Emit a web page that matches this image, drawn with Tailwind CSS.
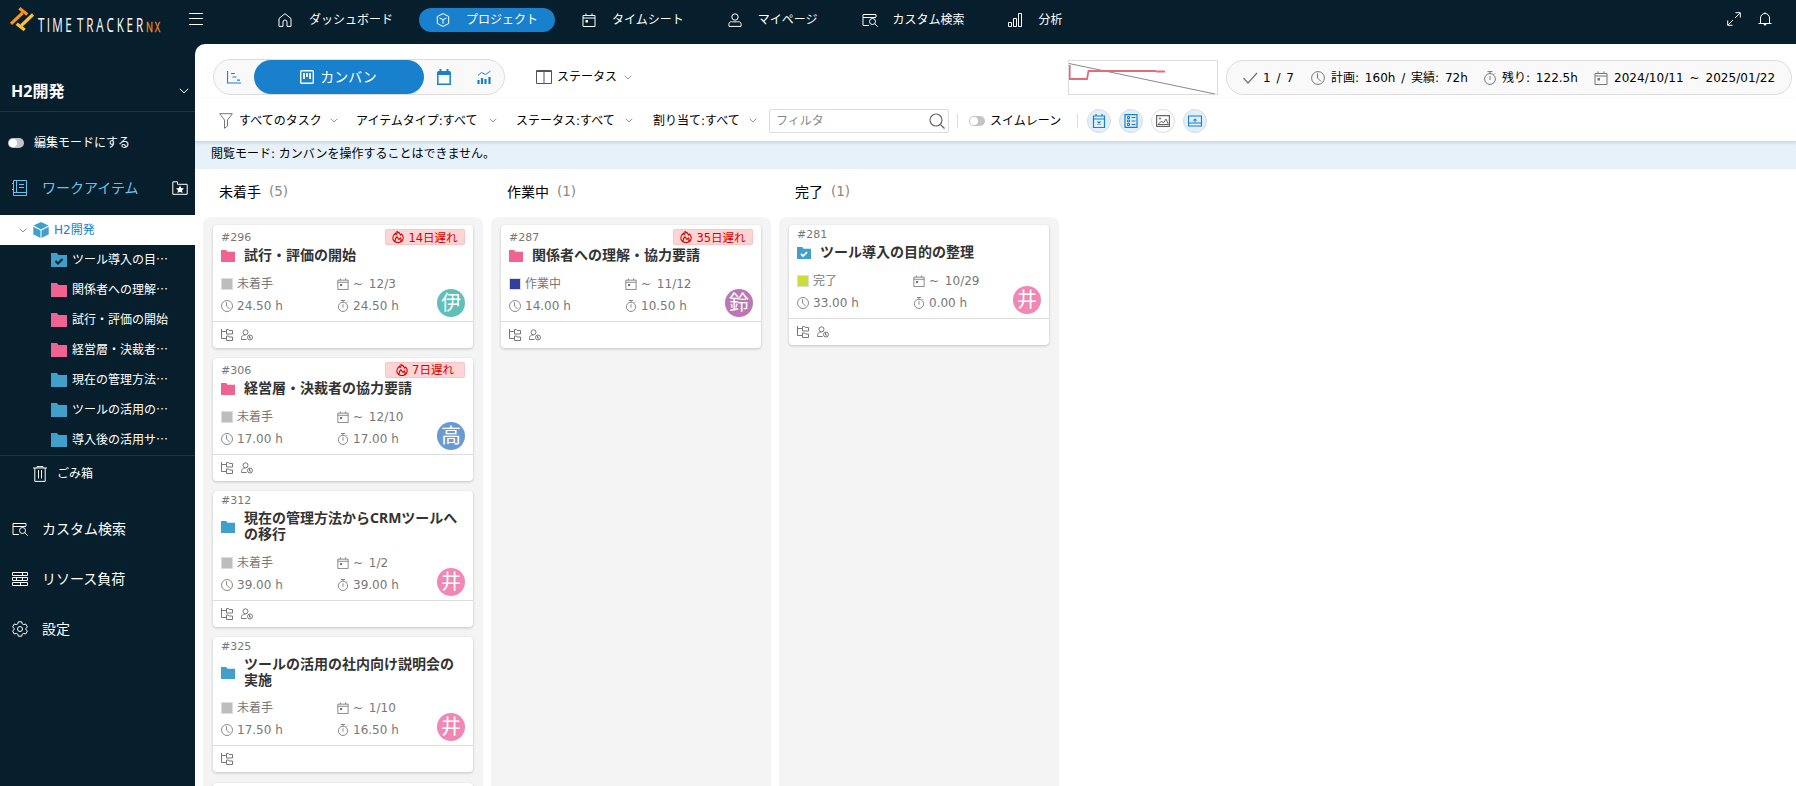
<!DOCTYPE html>
<html lang="ja">
<head>
    <meta charset="UTF-8">
    <title>TimeTracker NX</title>
    <script src="https://cdn.jsdelivr.net/npm/@tailwindcss/browser@4"></script>
</head>
<body class="w-[1796px] h-[786px] overflow-hidden bg-[#071f2d] text-xs text-black font-['DejaVu_Sans','Noto_Sans_CJK_JP',sans-serif]">

    <!-- アイコン定義 -->
    <svg class="hidden">
        <symbol id="home" viewBox="0 0 14 14"><path d="M1 5.500 7 .7l6 4.800V13.400H9V9a2 2 0 0 0-4 0v4.400H1z"/></symbol>
        <symbol id="cube" viewBox="0 0 14 14"><path d="M7 .6 12.700 3.500v7L7 13.400 1.300 10.500v-7zM3.500 5 7 6.700 10.500 5M7 6.700v4"/></symbol>
        <symbol id="calendar" viewBox="0 0 14 14"><path d="M1 2.500h12v11H1zM1 5h12M4 .5v2M10 .5v2"/><path d="M3.500 7h2.500v2.500H3.500z" fill="currentColor" stroke="none"/></symbol>
        <symbol id="person" viewBox="0 0 14 14"><circle cx="7" cy="4" r="3.200"/><path d="M1 13.400c-.8-6 2.500-4.500 6-4.500s6.800-1.500 6 4.500z"/></symbol>
        <symbol id="search-list" viewBox="0 0 16 14"><path d="M7 12.500H1v-11h13v2.500M1 4.500h13"/><circle cx="10.500" cy="8.500" r="3"/><path d="m12.700 10.700 3 3"/></symbol>
        <symbol id="bars" viewBox="0 0 14 14"><path d="M.5 9.500h3v4h-3zM5.500 5.500h3v8h-3zM10.500.5h3v13h-3z"/></symbol>
        <symbol id="expand" viewBox="0 0 14 14"><path d="M8 6l5-5M8.500.7h4.800v4.800M6 8l-5 5M.7 8.500v4.800h4.800"/></symbol>
        <symbol id="bell" viewBox="0 0 14 14"><path d="M.5 11.500h13M2.500 11.500V6a4.500 4.500 0 0 1 9 0v5.500M7 .3v1.200"/><path d="M5.300 12h3.400L7 14z" fill="currentColor" stroke="none"/></symbol>
        <symbol id="chevron" viewBox="0 0 10 6"><path d="m.8.8 4.200 4L9.200.8"/></symbol>
        <symbol id="book" viewBox="0 0 16 16"><path d="M1.500.500h13v15h-13zM1.500 12.500h13M4.500.500v12M7 4.500h5M7 7.500h5M0 3.500h1.500M0 9.500h1.500"/></symbol>
        <symbol id="folder-star" viewBox="0 0 16 14"><path d="M.8 13.300V.8h4.700v2.500h9.700v10z"/><path d="m8 4.500 1.200 2.600 2.800.3-2 1.900.6 2.800L8 10.700l-2.600 1.400.6-2.800-2-1.900 2.800-.3z" fill="currentColor" stroke="none"/></symbol>
        <symbol id="trash" viewBox="0 0 14 16"><path d="M0 2h14M4 2V.6h6V2M1.800 2v13.400h10.400V2M5.500 4v8.500M8.500 4v8.500"/></symbol>
        <symbol id="bricks" viewBox="0 0 16 14"><path d="M.5.500h15v3H.500zM.500 5.500h15v3H.500zM.500 10.500h15v3H.500zM10.500.500v3M4.500 5.500v3M10.500 5.500v3M8.500 10.500v3"/></symbol>
        <symbol id="gear" viewBox="0 0 16 16"><circle cx="8" cy="8" r="2.500"/><path d="M6.300.8h3.400l.5 2 1.500.8 2-.6 1.700 2.900L14 7.300v1.400l1.400 1.400-1.700 2.900-2-.6-1.500.8-.5 2H6.300l-.5-2-1.500-.8-2 .6L.600 10.100 2 8.700V7.300L.600 5.900 2.300 3l2 .6 1.500-.8z"/></symbol>
        <symbol id="cube-solid" viewBox="0 0 16 16"><path d="M8 0l7.500 3.600L8 7.600.5 3.600zM.3 4.800 7.500 8.500V16L.3 12.300zM15.700 4.800 8.500 8.500V16l7.200-3.700z" fill="currentColor" stroke="none"/></symbol>
        <symbol id="clock" viewBox="0 0 14 14"><circle cx="7" cy="7" r="6.400"/><path d="M6.500 2.500V7l3.500 3.500"/></symbol>
        <symbol id="stopwatch" viewBox="0 0 14 14"><circle cx="7" cy="8" r="5.400"/><path d="M4.500.6h5M7 .6v2M7 5v4M11 3.500l1-1"/></symbol>
        <symbol id="flame" viewBox="0 0 12 12"><path d="M3.500 2.200C1.800 3.500.8 5 .8 7a5.200 4.600 0 0 0 10.400 0c0-1.800-.6-3-1.500-4L8.500 4C8.200 2.500 7 1.200 5 .6 5.300 2 5 3 4.200 3.700zM3.200 10.500C2.800 8.500 3.500 7 5 5.800l2 2.700 1.500-1.500c.8 1.200.7 2.500 0 3.500" stroke-width="1.100"/></symbol>
        <symbol id="tree" viewBox="0 0 12 12"><path d="M.5 0v9.500H5M.5 2.500H5M5.500.5h2l.8 1h3.200v3.500h-6zM5.500 7h2l.8 1h3.200v3.500h-6z"/></symbol>
        <symbol id="assignee" viewBox="0 0 12 12"><circle cx="4.500" cy="3.300" r="2.500"/><path d="M5.500 10.500h-5c-.3-3.500 1.200-4.500 4-4.500"/><circle cx="9" cy="8.500" r="2.500"/><path d="M8.500 7v2H10"/></symbol>
    </svg>

    <header class="flex h-[38px] items-center text-white">
        <svg class="w-[189px] h-[38px] shrink-0" viewBox="0 0 189 38" fill="none">
            <path d="M19.300 8.200 27.300 14.500M11 23.800 22.500 13" stroke="#f7931e" stroke-width="3.200"/>
            <path d="M33 14.500 21.500 25.300M16.700 23.700l8 6.300" stroke="#fbc23a" stroke-width="3.200"/>
            <g fill="#fff" font-family="Open Sans" font-size="20.500">
                <text transform="translate(38 32) scale(.57 1)" textLength="59" lengthAdjust="spacing">TIME</text>
                <text transform="translate(77 32) scale(.57 1)" textLength="116" lengthAdjust="spacing">TRACKER</text>
            </g>
            <text transform="translate(146 32) scale(.64 1)" fill="#f7931e" stroke="#f7931e" stroke-width=".3" font-family="Open Sans" font-size="14.500" textLength="22" lengthAdjust="spacing">NX</text>
        </svg>
        <svg class="w-[14px] h-3 shrink-0" viewBox="0 0 14 12" stroke="#fff"><path d="M0 .5h14M0 5.500h14M0 11.500h14"/></svg>
        <nav class="flex items-center ml-[75px] pt-px whitespace-nowrap">
            <a class="flex items-center gap-[17px]"><svg class="size-[14px] fill-none stroke-current"><use href="#home"/></svg>ダッシュボード</a>
            <a class="flex items-center gap-4 ml-[26px] w-[136px] h-6 pl-[17px] rounded-full bg-[#1980ce]"><svg class="size-[14px] fill-none stroke-current"><use href="#cube"/></svg>プロジェクト</a>
            <a class="flex items-center gap-4 ml-[27px]"><svg class="size-[14px] fill-none stroke-current"><use href="#calendar"/></svg>タイムシート</a>
            <a class="flex items-center gap-4 ml-11"><svg class="size-[14px] fill-none stroke-current"><use href="#person"/></svg>マイページ</a>
            <a class="flex items-center gap-[15px] ml-11"><svg class="w-4 h-[14px] fill-none stroke-current"><use href="#search-list"/></svg>カスタム検索</a>
            <a class="flex items-center gap-[17px] ml-[43px]"><svg class="size-[14px] fill-none stroke-current"><use href="#bars"/></svg>分析</a>
        </nav>
        <div class="flex gap-[17px] ml-auto mr-6">
            <svg class="size-[14px] fill-none stroke-current"><use href="#expand"/></svg>
            <svg class="size-[14px] fill-none stroke-current"><use href="#bell"/></svg>
        </div>
    </header>

    <div class="flex h-[748px]">
        <aside class="w-[195px] shrink-0 text-white whitespace-nowrap">
            <div class="flex items-center justify-between h-[74px] pt-8 pl-[11px] pr-1.5 border-b border-[#17394d]">
                <span class="text-base font-bold font-['Noto_Sans','Noto_Sans_CJK_JP',sans-serif]">H2開発</span>
                <svg class="w-[10px] h-1.5 fill-none stroke-white"><use href="#chevron"/></svg>
            </div>
            <div class="flex items-center h-[62px] pl-2 gap-[10px]">
                <span class="flex w-4 h-[10px] rounded-full bg-[#c4c4c4] p-px"><i class="size-2 rounded-full bg-white"></i></span>編集モードにする
            </div>
            <div class="flex items-center h-[41px] pb-[13px] pl-3 pr-[7px] text-sm text-[#67c4f2]">
                <svg class="size-4 fill-none stroke-current"><use href="#book"/></svg>
                <span class="ml-[14px]">ワークアイテム</span>
                <svg class="w-4 h-[14px] ml-auto fill-none stroke-white text-white"><use href="#folder-star"/></svg>
            </div>
            <div class="flex items-center h-[30px] pl-[19px] bg-white text-[#1980ce]">
                <svg class="w-2 h-[5px] fill-none stroke-[#777]"><use href="#chevron"/></svg>
                <svg class="size-4 ml-1.5 mr-[5px] text-[#3fa0cc]"><use href="#cube-solid"/></svg>H2開発
            </div>
            <ul id="tree-items"></ul>
            <div class="flex items-center h-[40px] pb-[3px] pl-[33px] gap-[10px] border-t border-[#17394d]">
                <svg class="w-[14px] h-4 fill-none stroke-white"><use href="#trash"/></svg>ごみ箱
            </div>
            <div class="flex flex-col mt-[9px] text-sm">
                <div class="flex items-center h-[50px] pl-3 gap-[14px]"><svg class="w-4 h-[14px] fill-none stroke-white"><use href="#search-list"/></svg>カスタム検索</div>
                <div class="flex items-center h-[50px] pl-3 gap-[14px]"><svg class="w-4 h-[14px] fill-none stroke-white"><use href="#bricks"/></svg>リソース負荷</div>
                <div class="flex items-center h-[50px] pl-3 gap-[14px]"><svg class="size-4 fill-none stroke-white"><use href="#gear"/></svg>設定</div>
            </div>
        </aside>

        <main class="mt-1.5 flex flex-col w-[1601px] h-[742px] bg-white rounded-tl-[10px] overflow-hidden whitespace-nowrap">
            <!-- ビュー切り替えとサマリー -->
            <div class="flex shrink-0 h-[54px] pt-[15px] pl-[18px] pr-1">
                <div class="flex items-center w-[292px] h-9 border border-[#dcdcdc] rounded-full bg-[#f9f9f9] text-[#1980ce]">
                    <svg class="size-[14px] ml-[13px] mr-[13px]" viewBox="0 0 14 14" fill="none" stroke="currentColor"><path d="M.5 1v12H14M4 3.500h4M5.500 7h4M10 10.200h3" stroke-width="1.200"/></svg>
                    <div class="flex items-center justify-center gap-1.5 w-[170px] h-[34px] rounded-full bg-[#1980ce] text-white text-sm pr-[9px] pl-2">
                        <svg class="size-[14px]" viewBox="0 0 14 14" fill="none" stroke="#fff"><rect x=".7" y=".7" width="12.600" height="12.600" rx="1" stroke-width="1.400"/><path d="M4 3v6M7 3v4M10 3v6" stroke-width="1.800"/></svg>カンバン
                    </div>
                    <svg class="w-[14px] h-4 ml-[13px]" viewBox="0 0 14 16"><path d="M.8 3.500h12.400v11.700H.8z" fill="none" stroke="currentColor" stroke-width="1.500"/><path d="M1 2h12v4H1zM2.500 0h2v3h-2zM9.500 0h2v3h-2z" fill="currentColor"/></svg>
                    <svg class="size-[14px] ml-[26px]" viewBox="0 0 14 14" fill="none" stroke="currentColor"><path d="M1 5.500 4.500 2.500l4 2L13.500 1"/><path d="M1.500 10v4M5 8v6M8.500 9v5M12.500 7v7" stroke-width="2.200"/></svg>
                </div>
                <div class="flex items-center h-9 ml-[31px]">
                    <svg class="w-4 h-[14px] mr-[5px]" viewBox="0 0 16 14" fill="none" stroke="#555"><path d="M.5.500h15v13H.500zM8 1v12M1 1.500h14"/></svg>ステータス
                    <svg class="w-2 h-[5px] ml-[7px] fill-none stroke-[#777]"><use href="#chevron"/></svg>
                </div>
                <svg class="w-[150px] h-[35px] mt-px ml-auto mr-2 border border-[#dcdcdc]" viewBox="0 0 148 33" fill="none">
                    <path d="M0 2.500 146 33" stroke="#888"/>
                    <path d="M.7 4v14H18l1.500-8H86l2 .5h8" stroke="#e06c7c" stroke-width="1.800"/>
                </svg>
                <div class="flex items-center w-[566px] h-[35px] mt-px pl-4 border border-[#dcdcdc] rounded-full bg-[#f9f9f9] text-[#777] [word-spacing:2px]">
                    <svg class="w-[15px] h-3 mr-[5px]" viewBox="0 0 15 12" fill="none" stroke="currentColor" stroke-width="1.200"><path d="m.5 6 4.500 5L14 1"/></svg>
                    <span class="w-12 text-black">1 / 7</span>
                    <svg class="size-[14px] mr-1.5 fill-none stroke-current"><use href="#clock"/></svg>
                    <span class="w-[152px] text-black">計画: 160h / 実績: 72h</span>
                    <svg class="size-[14px] mr-[5px] fill-none stroke-current"><use href="#stopwatch"/></svg>
                    <span class="w-[92px] text-black">残り: 122.5h</span>
                    <svg class="size-[14px] mr-1.5 fill-none stroke-current"><use href="#calendar"/></svg>
                    <span class="text-black tracking-[0.05px]">2024/10/11 ~ 2025/01/22</span>
                </div>
            </div>

            <!-- フィルターバー -->
            <div class="relative flex items-center shrink-0 h-[44px] pt-0.5 pl-6 border-b border-[#cfdde0] shadow-[0_1px_3px_rgba(0,0,0,0.12)]">
                <svg class="w-[14px] h-4 mr-1.5" viewBox="0 0 14 16" fill="none" stroke="#777"><path d="M.7.7h12.600L8.500 7v6l-3 2.300V7z"/></svg>
                <span class="w-[91px]">すべてのタスク</span><svg class="w-2 h-[5px] fill-none stroke-[#777]"><use href="#chevron"/></svg>
                <span class="w-[133px] ml-[18px]">アイテムタイプ:すべて</span><svg class="w-2 h-[5px] fill-none stroke-[#777]"><use href="#chevron"/></svg>
                <span class="w-[109px] ml-[19px]">ステータス:すべて</span><svg class="w-2 h-[5px] fill-none stroke-[#777]"><use href="#chevron"/></svg>
                <span class="w-[96px] ml-5">割り当て:すべて</span><svg class="w-2 h-[5px] fill-none stroke-[#777]"><use href="#chevron"/></svg>
                <div class="flex items-center justify-between w-[180px] h-6 ml-3 pl-1.5 pr-[3px] border border-[#dcdcdc] rounded-xs text-[#888]">
                    フィルタ
                    <svg class="size-4" viewBox="0 0 16 16" fill="none" stroke="#666" stroke-width="1.200"><circle cx="7" cy="7" r="6"/><path d="m11.300 11.300 4.200 4.200"/></svg>
                </div>
                <i class="w-px h-[14px] ml-2 mr-[11px] bg-[#dcdcdc]"></i>
                <span class="flex w-4 h-[10px] rounded-full bg-[#c4c4c4] p-px mr-[5px]"><i class="size-2 rounded-full bg-white"></i></span>スイムレーン
                <i class="w-px h-[14px] ml-4 mr-[9px] bg-[#dcdcdc]"></i>
                <div class="flex gap-2 text-[#1980ce]">
                    <span class="flex items-center justify-center size-6 rounded-full border border-[#dcdcdc] bg-[#e1effa]"><svg class="size-[14px]" viewBox="0 0 14 14" fill="none" stroke="currentColor"><path d="M1.500 2h11v11.500h-11zM1.500 5h11M4 0v2M10 0v2M5.500 7.500l3 3M8.500 7.500l-3 3" stroke-width="1.200"/></svg></span>
                    <span class="flex items-center justify-center size-6 rounded-full border border-[#dcdcdc] bg-[#e1effa]"><svg class="size-[14px]" viewBox="0 0 14 14" fill="none" stroke="currentColor"><path d="M1 .6h12v12.800H1z" stroke-width="1.200"/><path d="M3.500 2.500h2v2h-2zM3.500 6h2v2h-2zM3.500 9.500h2v2h-2zM7.500 3.500h4M7.500 7h4M7.500 10.500h4"/></svg></span>
                    <span class="flex items-center justify-center size-6 rounded-full border border-[#dcdcdc] bg-white text-[#666]"><svg class="size-[14px]" viewBox="0 0 14 14" fill="none" stroke="currentColor"><path d="M.6 1.600h12.800v10.800H.6z" stroke-width="1.200"/><path d="M2 10.500 5.500 7l2 2L10 5l2.500 5.500z"/><circle cx="4" cy="4.500" r=".7"/></svg></span>
                    <span class="flex items-center justify-center size-6 rounded-full border border-[#dcdcdc] bg-[#e1effa]"><svg class="size-[14px]" viewBox="0 0 14 14" fill="none" stroke="currentColor"><path d="M.5 2h13v10H.500zM.500 9h13" stroke-width="1.200"/><path d="m4.500 6.500 2.500-2 2.500 2zM6.500 6.500h1v2h-1z" fill="currentColor" stroke="none"/></svg></span>
                </div>
            </div>

            <div class="flex items-center shrink-0 h-[27px] pl-4 pb-[3px] bg-[#e6f1fa]">閲覧モード: カンバンを操作することはできません。</div>

            <!-- カンバン -->
            <div id="board" class="flex gap-2 pl-2"></div>
        </main>
    </div>

    <script>
        const BLUE = 'text-[#3fa0cc]';
        const PINK = 'text-[#f06292]';

        const treeItems = [
            { name: 'ツール導入の目…', color: BLUE, done: true },
            { name: '関係者への理解…', color: PINK },
            { name: '試行・評価の開始', color: PINK },
            { name: '経営層・決裁者…', color: PINK },
            { name: '現在の管理方法…', color: BLUE },
            { name: 'ツールの活用の…', color: BLUE },
            { name: '導入後の活用サ…', color: BLUE },
        ];

        const columns = [
            { name: '未着手', count: 5, square: 'bg-[#bdbdbd]', cards: [
                { id: 296, late: 14, title: '試行・評価の開始', color: PINK, due: '12/3', plan: '24.50', rest: '24.50', user: '伊', userBg: 'bg-[#5fc0bb]', assignee: true },
                { id: 306, late: 7, title: '経営層・決裁者の協力要請', color: PINK, due: '12/10', plan: '17.00', rest: '17.00', user: '高', userBg: 'bg-[#6a9ad2]', assignee: true },
                { id: 312, title: '現在の管理方法からCRMツールへ<br>の移行', color: BLUE, due: '1/2', plan: '39.00', rest: '39.00', user: '井', userBg: 'bg-[#f087b5]', assignee: true },
                { id: 325, title: 'ツールの活用の社内向け説明会の<br>実施', color: BLUE, due: '1/10', plan: '17.50', rest: '16.50', user: '井', userBg: 'bg-[#f087b5]' },
            ] },
            { name: '作業中', count: 1, square: 'bg-[#303f9f]', cards: [
                { id: 287, late: 35, title: '関係者への理解・協力要請', color: PINK, due: '11/12', plan: '14.00', rest: '10.50', user: '鈴', userBg: 'bg-[#ba77b3]', assignee: true },
            ] },
            { name: '完了', count: 1, square: 'bg-[#cddc39]', cards: [
                { id: 281, title: 'ツール導入の目的の整理', color: BLUE, done: true, due: '10/29', plan: '33.00', rest: '0.00', user: '井', userBg: 'bg-[#f087b5]', assignee: true },
            ] },
        ];

        const icon = (name, cls) => `<svg class="${cls} fill-none stroke-current shrink-0"><use href="#${name}"/></svg>`;

        const folder = (item, size, check) => `
            <svg class="${size} ${item.color} shrink-0" viewBox="0 0 16 14" preserveAspectRatio="none">
                <path d="M0 0h6l1.500 2H16v12H0z" fill="currentColor"/>
                ${item.done ? `<path d="m4.500 8 2.500 2.500 4.500-4.500" fill="none" stroke="${check}" stroke-width="2"/>` : ''}
            </svg>`;

        const card = (c, square) => `
            <div class="relative shrink-0 bg-white rounded-[4px] shadow-[0_1px_3px_rgba(0,0,0,0.2)] text-[#777]">
                <div class="flex justify-between px-2 ${c.late ? 'pt-1 h-[22px]' : 'pt-px h-[19px]'}">
                    <span class="text-[11px] leading-[18px]">#${c.id}</span>
                    ${c.late ? `<span class="flex items-center justify-center gap-1 w-20 h-4 border border-[#fbc4c4] rounded-xs bg-[#ffd4d4] text-[#d50000] text-[11.5px] leading-[14px]">${icon('flame', 'size-3')}<span class="pt-px">${c.late}日遅れ</span></span>` : ''}
                </div>
                <div class="flex items-center px-2 gap-[9px]">
                    ${folder(c, 'w-[14px] h-3 relative top-px', '#fff')}
                    <span class="text-sm leading-[15.8px] font-bold text-[#333] font-['Noto_Sans','Noto_Sans_CJK_JP',sans-serif]">${c.title}</span>
                </div>
                <div class="grid grid-cols-[116px_1fr] auto-rows-[22px] items-center pt-[10px] pb-1 pl-2">
                    <span class="flex items-center gap-1"><i class="size-3 border border-[#ddd] ${square}"></i>${c.status}</span>
                    <span class="flex items-center gap-1 [word-spacing:2px]">${icon('calendar', 'size-3')}~ ${c.due}</span>
                    <span class="flex items-center gap-1">${icon('clock', 'size-3')}${c.plan} h</span>
                    <span class="flex items-center gap-1">${icon('stopwatch', 'size-3')}${c.rest} h</span>
                </div>
                <span class="absolute right-2 bottom-[31px] flex items-center justify-center size-7 rounded-full text-white text-xl leading-none ${c.userBg}">${c.user}</span>
                <div class="flex items-center gap-2 h-[27px] px-2 border-t border-[#dcdcdc]">
                    ${icon('tree', 'size-3')}${c.assignee ? icon('assignee', 'size-3') : ''}
                </div>
            </div>`;

        document.getElementById('tree-items').innerHTML = treeItems.map(t => `
            <li class="flex items-center h-[30px] pl-[51px] gap-[5px] font-['Noto_Sans_CJK_JP',sans-serif]">${folder(t, 'w-4 h-[14px]', '#071f2d')}<span class="pb-0.5">${t.name}</span></li>`).join('');

        document.getElementById('board').innerHTML = columns.map(col => `
            <section class="w-[280px]">
                <h3 class="flex items-center h-12 pl-4 pb-0.5 text-sm">${col.name}<span class="ml-2 text-[13.5px] text-[#888]">(${col.count})</span></h3>
                <div class="flex flex-col gap-[10.2px] h-[569px] overflow-hidden rounded-t-lg bg-[#f4f4f4] px-[10px] pt-2">
                    ${col.cards.map(c => card({ ...c, status: col.name }, col.square)).join('')}
                    ${col.count > col.cards.length ? '<div class="shrink-0 h-6 bg-white rounded-[4px] shadow-[0_1px_3px_rgba(0,0,0,0.2)]"></div>' : ''}
                </div>
            </section>`).join('');
    </script>
</body>
</html>
